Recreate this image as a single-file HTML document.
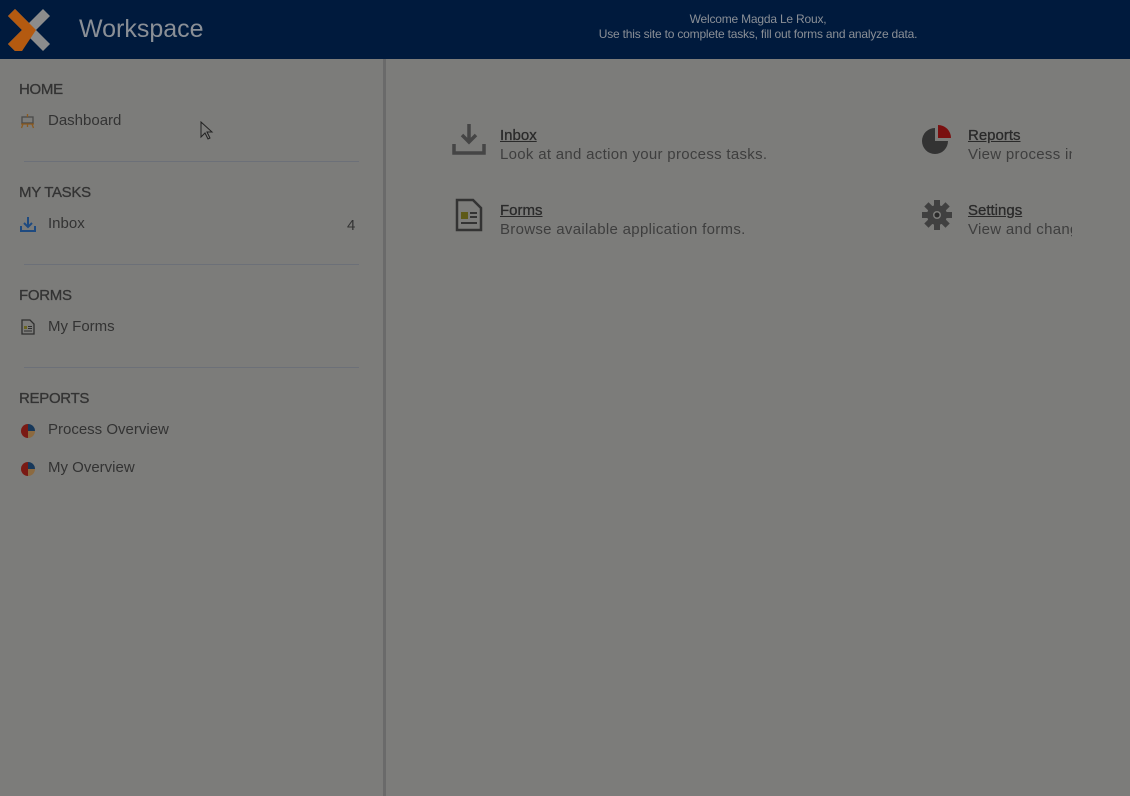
<!DOCTYPE html>
<html><head><meta charset="utf-8"><style>
*{margin:0;padding:0;box-sizing:border-box}
body{width:1130px;height:796px;overflow:hidden;background:#7c7c7a;font-family:"Liberation Sans","DejaVu Sans",sans-serif;color:#2e2e2e;position:relative}
.hdr{position:absolute;left:0;top:0;width:1130px;height:59px;background:#001a3d}
.hdr .title{position:absolute;left:79px;top:15px;font-size:25px;color:#8a8f96}
.hdr .welcome{position:absolute;left:560px;width:396px;top:12px;text-align:center;font-size:12px;line-height:15px;color:#8a8f96;letter-spacing:-0.2px}
.side{position:absolute;left:0;top:59px;width:386px;height:737px;background:#7c7c7a;border-right:3px solid #6a6a6a}
.sec{position:absolute;left:19px;font-size:15px;color:#333;letter-spacing:-0.3px;-webkit-text-stroke:0.3px #333}
.item{position:absolute;left:48px;font-size:15px;color:#333}
.ico{position:absolute;left:20px}
.hr{position:absolute;left:24px;width:335px;height:1px;background:#6c7078}
.tile{position:absolute}
.tile a{font-size:15px;color:#2a2a2a;text-decoration:underline;display:block;-webkit-text-stroke:0.3px #2a2a2a}
.tile span{font-size:15px;color:#3e3e3e;display:block;margin-top:2px;white-space:nowrap;letter-spacing:0.3px}
</style></head><body>
<div class="hdr">
<svg style="position:absolute;left:8px;top:9px" width="42" height="42" viewBox="0 0 42 42">
<polygon points="7,0 21,14 35,0 42,7 28,21 42,35 35,42 21,28 14,42 7,42 0,35 14,21 0,7" fill="#8c8c8c"/>
<polygon points="7,0 28,21 14,42 7,42 0,35 14,21 0,7" fill="#b45a10"/>
</svg>
<div class="title">Workspace</div>
<div class="welcome">Welcome Magda Le Roux,<br>Use this site to complete tasks, fill out forms and analyze data.</div>
</div>
<div class="side">
<div class="sec" style="top:22px">HOME</div>
<svg class="ico" style="top:55px" width="15" height="15" viewBox="0 0 15 15"><rect x="2" y="3" width="11" height="6" fill="none" stroke="#4a4a4a" stroke-width="1.3"/><path d="M7.5 0v3M1 10h13M3 10l-1.5 4M12 10l1.5 4M7.5 10v3" stroke="#8a5a20" stroke-width="1.3"/></svg>
<div class="item" style="top:53px">Dashboard</div>
<div class="hr" style="top:102px"></div>
<div class="sec" style="top:125px">MY TASKS</div>
<svg class="ico" style="top:158px" width="16" height="15" viewBox="0 0 16 15"><path d="M8 0v9M4 6l4 4 4-4M1 9v5h14V9" fill="none" stroke="#1e4a80" stroke-width="2"/></svg>
<div class="item" style="top:156px">Inbox</div>
<div style="position:absolute;left:347px;top:158px;font-size:15px;color:#333">4</div>
<div class="hr" style="top:205px"></div>
<div class="sec" style="top:228px">FORMS</div>
<svg class="ico" style="top:260px;left:21px" width="14" height="16" viewBox="0 0 14 16"><path d="M1 1h8l4 4v10H1z" fill="none" stroke="#2e2e2e" stroke-width="1.3"/><rect x="3" y="7" width="3" height="3" fill="#6a6420"/><path d="M7 7.5h4M7 9.5h4M3 12h8" stroke="#2e2e2e" stroke-width="1"/></svg>
<div class="item" style="top:259px">My Forms</div>
<div class="hr" style="top:308px"></div>
<div class="sec" style="top:331px">REPORTS</div>
<svg class="ico" style="top:364px" width="16" height="16" viewBox="0 0 16 16"><path d="M8 1A7 7 0 0 0 8 15z" fill="#7a1a14"/><path d="M8 1A7 7 0 0 1 15 8H8z" fill="#17385a"/><path d="M15 8A7 7 0 0 1 8 15V8z" fill="#8c6a40"/></svg>
<div class="item" style="top:362px">Process Overview</div>
<svg class="ico" style="top:402px" width="16" height="16" viewBox="0 0 16 16"><path d="M8 1A7 7 0 0 0 8 15z" fill="#7a1a14"/><path d="M8 1A7 7 0 0 1 15 8H8z" fill="#17385a"/><path d="M15 8A7 7 0 0 1 8 15V8z" fill="#8c6a40"/></svg>
<div class="item" style="top:400px">My Overview</div>
</div>
<svg style="position:absolute;left:452px;top:124px" width="34" height="32" viewBox="0 0 34 32"><path d="M17 0v17M10 11l7 7 7-7" fill="none" stroke="#454545" stroke-width="3.5"/><path d="M2 20v9h30v-9" fill="none" stroke="#454545" stroke-width="3.5"/></svg>
<div class="tile" style="left:500px;top:127px"><a>Inbox</a><span>Look at and action your process tasks.</span></div>
<svg style="position:absolute;left:455px;top:198px" width="28" height="34" viewBox="0 0 28 34"><path d="M2 2h16l8 8v22H2z" fill="none" stroke="#333" stroke-width="2.5"/><rect x="6" y="14" width="7" height="7" fill="#5e5a18"/><path d="M15 15h7M15 19h7M6 25h16" stroke="#333" stroke-width="2"/></svg>
<div class="tile" style="left:500px;top:202px"><a>Forms</a><span>Browse available application forms.</span></div>
<svg style="position:absolute;left:920px;top:124px" width="34" height="34" viewBox="0 0 34 34"><path d="M15 4A13 13 0 1 0 28 17H15z" fill="#333"/><path d="M18 1A13 13 0 0 1 31 14H18z" fill="#7a1010"/></svg>
<div class="tile" style="left:968px;top:127px;width:104px;overflow:hidden"><a>Reports</a><span>View process information</span></div>
<svg style="position:absolute;left:920px;top:198px" width="34" height="34" viewBox="0 0 34 34"><g fill="#404040"><circle cx="17" cy="17" r="10"/><g stroke="#404040" stroke-width="6"><path d="M17 2v30M2 17h30M6.4 6.4l21.2 21.2M27.6 6.4L6.4 27.6"/></g></g><circle cx="17" cy="17" r="4" fill="#7c7c7a"/><circle cx="17" cy="17" r="2.5" fill="#2a2a2a"/></svg>
<div class="tile" style="left:968px;top:202px;width:104px;overflow:hidden"><a>Settings</a><span>View and change settings</span></div>
<svg style="position:absolute;left:200px;top:121px" width="14" height="20" viewBox="0 0 14 20"><path d="M1 1v15l4-4 3 6 2-1-3-6h5z" fill="#7c7c7a" stroke="#222" stroke-width="1"/></svg>
</body></html>
